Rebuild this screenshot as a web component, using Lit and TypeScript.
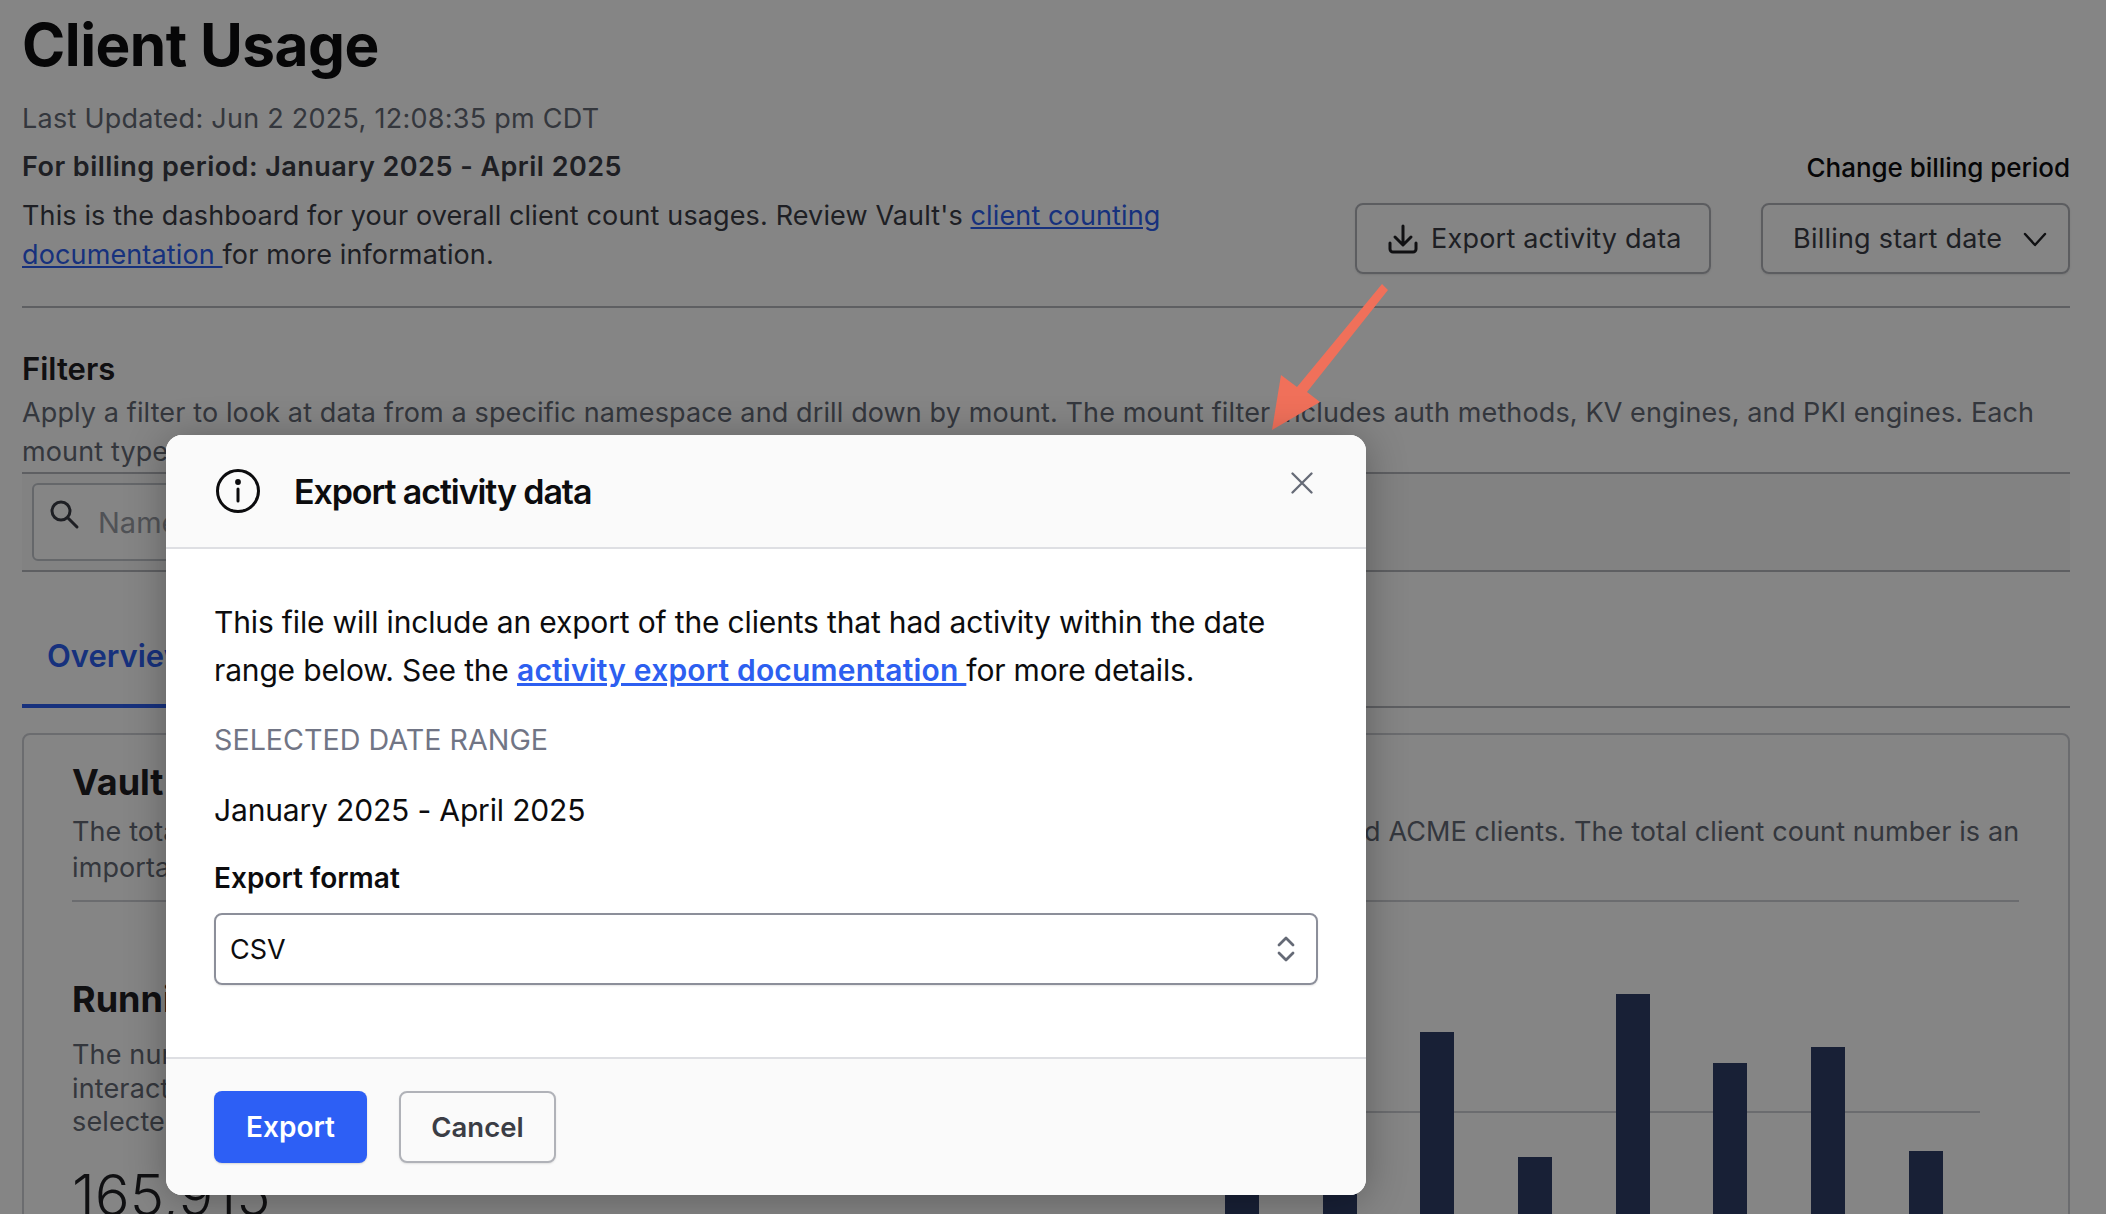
import { LitElement, css, html } from 'lit';
import { customElement } from 'lit/decorators.js';

// bar heights measured up from the chart floor, which sits below the fold
const BARS = [119, 109, 267, 142, 305, 236, 252, 148];

@customElement('app-root')
export class AppRoot extends LitElement {
  static styles = css`
    :host {
      display: block;
      position: relative;
      width: 2106px;
      height: 1214px;
      overflow: hidden;
      background: #fff;
      font-family: Inter, 'Liberation Sans', sans-serif;
      color: #3b3d45;
      font-size: 27px;
    }
    a {
      color: #2d5ff0;
      text-decoration: underline;
    }
    .page {
      padding: 10px 36px 0 22px;
    }
    h1 {
      margin: 0 0 19px;
      font-size: 58.5px;
      line-height: 70px;
      font-weight: 700;
      letter-spacing: -0.5px;
      color: #0c0c0e;
    }
    .updated {
      line-height: 40px;
      color: #656a76;
      letter-spacing: 0.26px;
    }
    .head {
      display: flex;
      justify-content: space-between;
      align-items: flex-start;
      margin-top: 8px;
      padding-bottom: 32px;
      border-bottom: 2px solid #b4b7bd;
    }
    .intro {
      width: 1190px;
    }
    .billing {
      line-height: 40px;
      font-weight: 600;
      letter-spacing: 0.47px;
      color: #3b3d45;
      margin-bottom: 9px;
    }
    .desc {
      line-height: 39px;
      letter-spacing: 0.13px;
    }
    .side {
      display: flex;
      flex-direction: column;
      align-items: flex-end;
      gap: 15px;
      padding-top: 1px;
    }
    .side-label {
      line-height: 40px;
      font-weight: 500;
      font-size: 26px;
      letter-spacing: -0.05px;
      color: #0c0c0e;
    }
    .side-btns {
      display: flex;
      gap: 50px;
    }
    .ghost {
      display: flex;
      align-items: center;
      box-sizing: border-box;
      height: 71px;
      border: 2px solid #b0b2b9;
      border-radius: 8px;
      color: #3b3d45;
      letter-spacing: 0.22px;
      box-shadow: 0 1px 2px rgba(0, 0, 0, 0.1);
    }
    .ghost.export {
      width: 356px;
      padding-left: 30px;
      gap: 12px;
    }
    .ghost.period {
      width: 309px;
      padding: 0 21px 0 30px;
      justify-content: space-between;
    }
    .filters {
      margin-top: 41px;
    }
    .filters h2 {
      margin: 0 0 4px;
      font-size: 31px;
      line-height: 40px;
      font-weight: 600;
      color: #1f2024;
    }
    .filters p {
      margin: 0;
      line-height: 39px;
      letter-spacing: 0.12px;
      color: #656a76;
    }
    .filter-bar {
      margin-top: 1px;
      padding: 9px 10px;
      background: #fafafa;
      border-top: 2px solid #b4b7bd;
      border-bottom: 2px solid #b4b7bd;
    }
    .search {
      display: flex;
      align-items: center;
      box-sizing: border-box;
      width: 700px;
      height: 78px;
      padding-left: 14px;
      gap: 18px;
      background: #fff;
      border: 2px solid #c2c5cb;
      border-radius: 6px;
      font-size: 29px;
      color: #9a9da6;
    }
    .tabs {
      margin-top: 49px;
      height: 87px;
      box-sizing: border-box;
      border-bottom: 2px solid #b4b7bd;
      position: relative;
    }
    .tab {
      display: inline-block;
      box-sizing: border-box;
      height: 87px;
      padding: 15px 25px 0;
      line-height: 40px;
      font-weight: 600;
      font-size: 31px;
      color: #2d5ff0;
      border-bottom: 4px solid #2d5ff0;
    }
    .card {
      margin-top: 25px;
      height: 600px;
      padding: 27px 49px 0 48px;
      border: 2px solid #ced0d5;
      border-radius: 8px;
      box-sizing: border-box;
    }
    .card h3 {
      margin: 0;
      font-size: 36px;
      line-height: 40px;
      font-weight: 700;
      color: #1f2024;
    }
    .card-desc {
      margin: 12px 0 13px 0;
      padding-bottom: 14px;
      line-height: 36px;
      letter-spacing: 0.11px;
      white-space: nowrap;
      color: #656a76;
      border-bottom: 2px solid #ced0d5;
    }
    .running {
      display: flex;
      margin-top: 77px;
    }
    .running-text {
      width: 1102px;
      flex: none;
    }
    .running-text p {
      margin: 19px 0 26px;
      line-height: 33.5px;
      letter-spacing: 0.14px;
      color: #656a76;
    }
    .stat {
      font-size: 58px;
      line-height: 60px;
      font-weight: 300;
      color: #1f2024;
    }
    .chart {
      position: relative;
      display: flex;
      align-items: flex-end;
      gap: 63.7px;
      box-sizing: border-box;
      width: 806px;
      height: 320px;
      padding-left: 51px;
    }
    .bar {
      position: relative;
      width: 34px;
      flex: none;
      background: #2f3f68;
    }
    .gridline {
      position: absolute;
      left: 0;
      right: 0;
      top: 132px;
      height: 2px;
      background: #ced0d5;
    }
    .scrim {
      position: absolute;
      inset: 0;
      background: rgba(0, 0, 0, 0.48);
    }
    .arrow {
      position: absolute;
      left: 1260px;
      top: 275px;
    }
    .modal {
      position: absolute;
      left: 166px;
      top: 435px;
      width: 1200px;
      height: 760px;
      display: flex;
      flex-direction: column;
      background: #fff;
      border-radius: 16px;
      overflow: hidden;
      color: #0c0c0e;
    }
    .modal-wrap {
      position: absolute;
      left: 166px;
      top: 435px;
      width: 1200px;
      height: 760px;
      border-radius: 16px;
      box-shadow: 0 4px 40px rgba(0, 0, 0, 0.3);
    }
    .m-head {
      display: flex;
      align-items: center;
      box-sizing: border-box;
      height: 114px;
      padding: 0 53px 0 50px;
      background: #fafafa;
      border-bottom: 2px solid #dedfe3;
    }
    .m-title {
      margin-left: 34px;
      flex: 1;
      font-size: 34px;
      font-weight: 600;
      letter-spacing: -1.1px;
    }
    .close {
      margin-top: -16px;
    }
    .m-body {
      flex: 1;
      padding: 49px 48px 0;
    }
    .m-text {
      line-height: 48px;
      font-size: 30px;
      letter-spacing: -0.16px;
    }
    .m-text a {
      font-weight: 600;
      letter-spacing: 0.2px;
      text-decoration-thickness: 3px;
    }
    .m-label {
      margin-top: 26px;
      line-height: 40px;
      font-size: 28.7px;
      color: #717585;
    }
    .m-range {
      margin-top: 30px;
      line-height: 40px;
      font-size: 30px;
      letter-spacing: -0.16px;
    }
    .m-format {
      margin-top: 28px;
      line-height: 40px;
      font-size: 28px;
      font-weight: 600;
    }
    .select {
      margin-top: 15px;
      display: flex;
      align-items: center;
      justify-content: space-between;
      box-sizing: border-box;
      width: 1104px;
      height: 72px;
      padding: 0 21px 0 14px;
      border: 2px solid #8c8f9a;
      border-radius: 8px;
      font-size: 27px;
      box-shadow: 0 1px 2px rgba(0, 0, 0, 0.1);
    }
    .m-foot {
      display: flex;
      gap: 32px;
      box-sizing: border-box;
      height: 138px;
      padding: 32px 48px 0;
      background: #fafafa;
      border-top: 2px solid #dedfe3;
    }
    .btn {
      display: flex;
      align-items: center;
      justify-content: center;
      box-sizing: border-box;
      height: 72px;
      border-radius: 8px;
      font-size: 28px;
      font-weight: 600;
    }
    .btn.primary {
      width: 153px;
      background: #2d5ff5;
      color: #fff;
      box-shadow: 0 1px 2px rgba(0, 0, 0, 0.15);
    }
    .btn.cancel {
      width: 157px;
      font-size: 27.5px;
      color: #3b3d45;
      border: 2px solid #b0b2b8;
      background: #fafafa;
      box-shadow: 0 1px 2px rgba(0, 0, 0, 0.1);
    }
    svg {
      display: block;
      flex: none;
    }
  `;

  render() {
    return html`
      <div class="page">
        <h1>Client Usage</h1>
        <div class="updated">Last Updated: Jun 2 2025, 12:08:35 pm CDT</div>
        <div class="head">
          <div class="intro">
            <div class="billing">For billing period: January 2025 - April 2025</div>
            <div class="desc">
              This is the dashboard for your overall client count usages. Review Vault's
              <a href="#">client counting documentation </a>for more information.
            </div>
          </div>
          <div class="side">
            <div class="side-label">Change billing period</div>
            <div class="side-btns">
              <div class="ghost export">
                <svg width="32" height="32" viewBox="0 0 32 32" fill="none" stroke="#1f2024" stroke-width="3" stroke-linecap="round" stroke-linejoin="round">
                  <path d="M16 3v18M8 14l8 8 8-8" />
                  <path d="M3 20v6a3 3 0 0 0 3 3h20a3 3 0 0 0 3-3v-6" />
                </svg>
                Export activity data
              </div>
              <div class="ghost period">
                Billing start date
                <svg width="24" height="24" viewBox="0 0 24 24" fill="none" stroke="#1f2024" stroke-width="2.4" stroke-linecap="round" stroke-linejoin="round">
                  <path d="M2 7l10 11L22 7" />
                </svg>
              </div>
            </div>
          </div>
        </div>

        <div class="filters">
          <h2>Filters</h2>
          <p>
            Apply a filter to look at data from a specific namespace and drill down by mount. The mount filter includes auth methods, KV engines, and PKI engines. Each mount type
          </p>
        </div>
        <div class="filter-bar">
          <div class="search">
            <svg width="32" height="32" viewBox="0 0 32 32" fill="none" stroke="#3b3d45" stroke-width="3" stroke-linecap="round" style="margin-top:-16px">
              <circle cx="13" cy="13" r="9" />
              <path d="M20 20l9 9" />
            </svg>
            Name
          </div>
        </div>

        <div class="tabs"><span class="tab">Overview</span></div>

        <div class="card">
          <h3>Vault usage metrics</h3>
          <div class="card-desc">
            The total number of all clients over this billing date range, including entity, non-entity, secret sync and ACME clients. The total client count number is an<br />important consideration for Vault billing.
          </div>
          <div class="running">
            <div class="running-text">
              <h3>Running client total</h3>
              <p>The number of clients which<br />interacted with Vault during the<br />selected date range.</p>
              <div class="stat">165,915</div>
            </div>
            <div class="chart">
              <div class="gridline"></div>
              ${BARS.map((h) => html`<div class="bar" style="height:${h}px"></div>`)}
            </div>
          </div>
        </div>
      </div>

      <div class="scrim"></div>

      <svg class="arrow" width="130" height="160" viewBox="0 0 130 160">
        <path fill="#f0705a" d="M122 9L128 15 47 117 60 127 12 155 21 100 37 112z" />
      </svg>

      <div class="modal-wrap"></div>
      <div class="modal">
        <div class="m-head">
          <svg width="44" height="44" viewBox="0 0 44 44" fill="none" stroke="#0c0c0e" stroke-width="3">
            <circle cx="22" cy="22" r="20.5" />
            <path d="M22 20v12" stroke-linecap="round" />
            <circle cx="22" cy="13" r="1.4" fill="#0c0c0e" />
          </svg>
          <div class="m-title">Export activity data</div>
          <svg class="close" width="22" height="22" viewBox="0 0 22 22" fill="none" stroke="#656a76" stroke-width="2.3" stroke-linecap="round">
            <path d="M1.5 1.5l19 19M20.5 1.5l-19 19" />
          </svg>
        </div>
        <div class="m-body">
          <div class="m-text">
            This file will include an export of the clients that had activity within the date range below. See the
            <a href="#">activity export documentation </a>for more details.
          </div>
          <div class="m-label">SELECTED DATE RANGE</div>
          <div class="m-range">January 2025 - April 2025</div>
          <div class="m-format">Export format</div>
          <div class="select">
            CSV
            <svg width="18" height="26" viewBox="0 0 18 26" fill="none" stroke="#656a76" stroke-width="2.8" stroke-linecap="round" stroke-linejoin="round">
              <path d="M2 9l7-7 7 7M2 17l7 7 7-7" />
            </svg>
          </div>
        </div>
        <div class="m-foot">
          <div class="btn primary">Export</div>
          <div class="btn cancel">Cancel</div>
        </div>
      </div>
    `;
  }
}

declare global {
  interface HTMLElementTagNameMap {
    'app-root': AppRoot;
  }
}
